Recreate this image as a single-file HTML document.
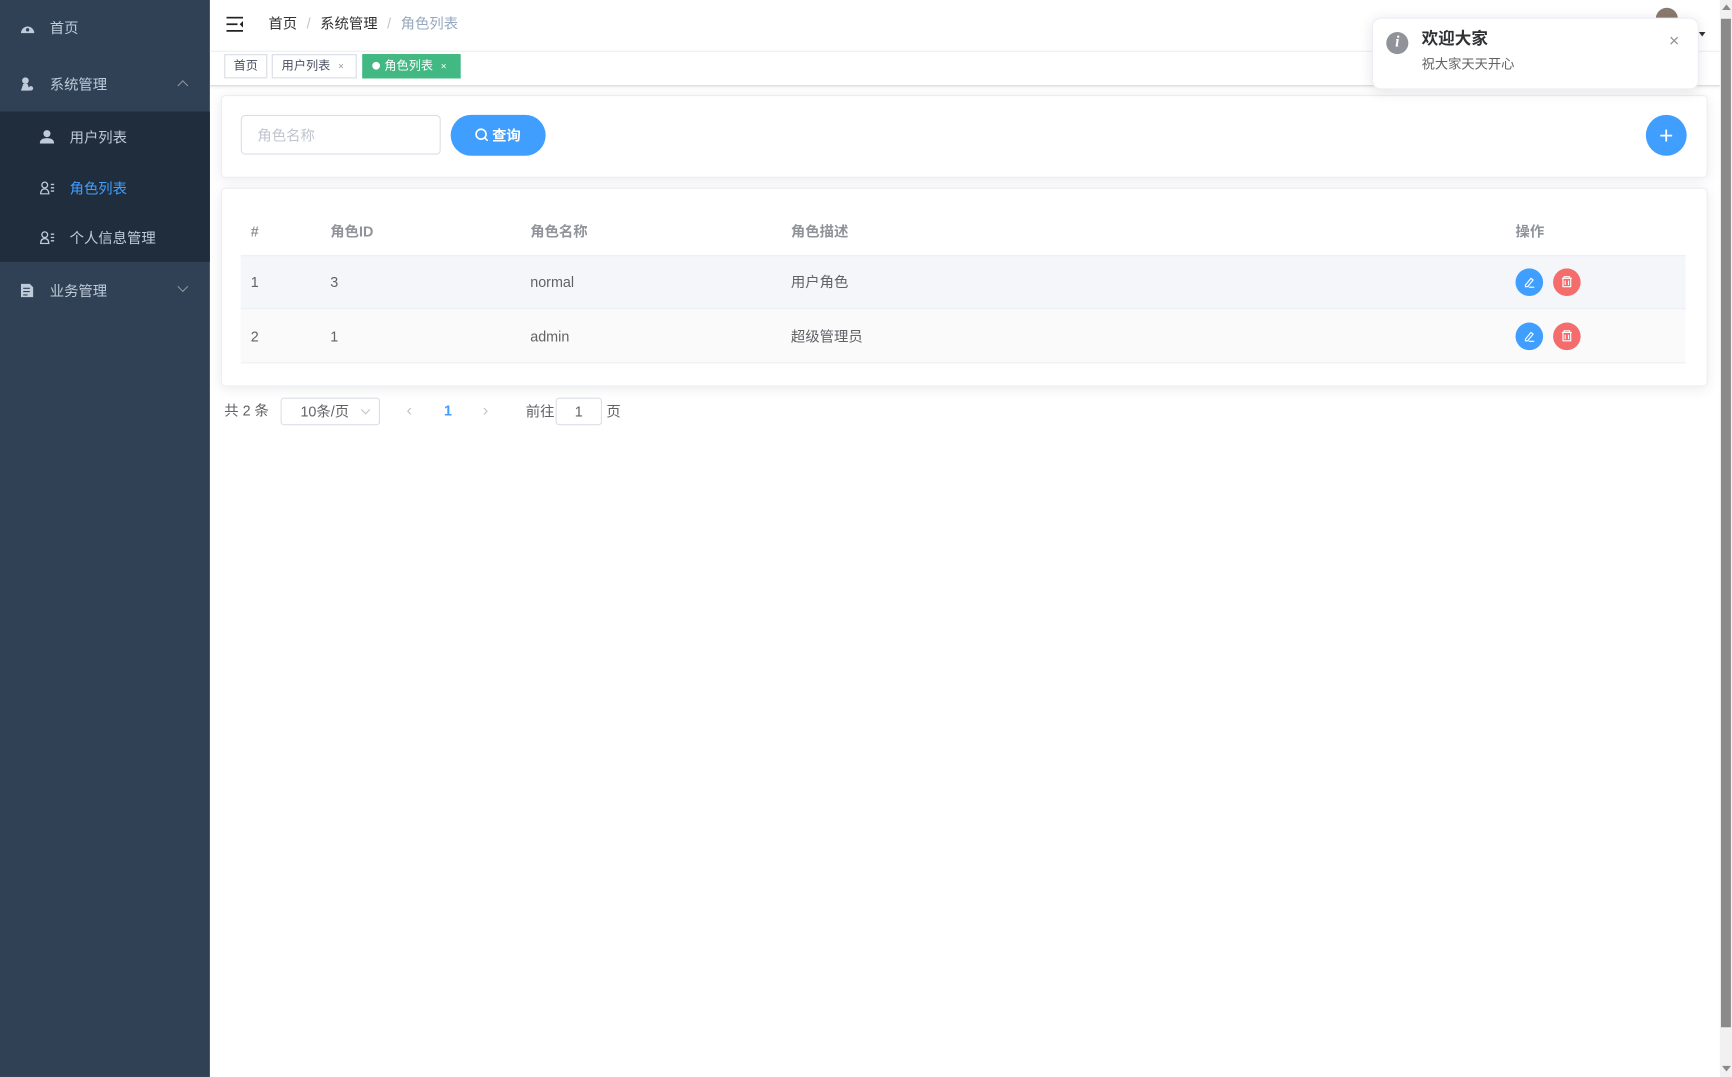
<!DOCTYPE html>
<html><head><meta charset="utf-8"><style>
html,body{margin:0;padding:0;width:1732px;height:1077px;overflow:hidden;background:#fff;font-family:"Liberation Sans","Noto Sans CJK SC",sans-serif;line-height:1.15}
#w{position:absolute;left:0;top:0;width:1568px;height:975px;transform:scale(1.10459);transform-origin:0 0;}
.a{position:absolute}
.side{left:0;top:0;width:190px;height:975px;background:#304156}
.sub{left:0;top:101px;width:190px;height:136px;background:#1f2d3d}
.mi{color:#bfcbd9;font-size:13px}
.t{font-size:13px;color:#606266}
.tag{top:49px;height:22px;border:1px solid #d8dce5;background:#fff;font-size:11px;color:#495060;line-height:21px;box-sizing:border-box}
.card{background:#fff;border:1px solid #ebeef5;border-radius:4px;box-shadow:0 2px 12px rgba(0,0,0,.08)}
.th{font-size:13px;color:#909399;font-weight:bold;top:201px;line-height:18px}
.td{font-size:13px;color:#606266;line-height:18px}
</style></head><body><div id="w">
<div class="a side"></div><div class="a sub"></div>
<svg class="a" style="left:18px;top:19px" width="14" height="12" viewBox="0 0 14 12"><path d="M1 11A6 6 0 1 1 13 11Z" fill="#bfcbd9"/><circle cx="7" cy="8" r="1.5" fill="#304156"/></svg>
<div class="a mi" style="left:45px;top:19px">首页</div>
<svg class="a" style="left:18px;top:69px" width="13" height="14"><circle cx="5" cy="4" r="3" fill="#bfcbd9"/><path d="M1 13 3 7h4l2 6z" fill="#bfcbd9"/><circle cx="10" cy="11" r="2" fill="#bfcbd9"/></svg>
<div class="a mi" style="left:45px;top:70px">系统管理</div>
<div class="a" style="left:162px;top:74px;width:6px;height:6px;border-left:1px solid #909399;border-top:1px solid #909399;transform:rotate(45deg)"></div>
<svg class="a" style="left:36px;top:117px" width="13" height="13"><circle cx="6.5" cy="4" r="3.2" fill="#bfcbd9"/><path d="M0 13Q0 8 6.5 8T13 13z" fill="#bfcbd9"/></svg>
<div class="a mi" style="left:63px;top:118px">用户列表</div>
<svg class="a" style="left:36px;top:164px" width="14" height="12" fill="none" stroke="#bfcbd9" stroke-width="1.2"><circle cx="4.5" cy="3.5" r="2.6"/><path d="M.8 11.5Q1 7 4.5 7T8.2 11.5zM10 3h3M10 6h3M10 9h3"/></svg>
<div class="a" style="left:63px;top:164px;font-size:13px;color:#409eff">角色列表</div>
<svg class="a" style="left:36px;top:209px" width="14" height="12" fill="none" stroke="#bfcbd9" stroke-width="1.2"><circle cx="4.5" cy="3.5" r="2.6"/><path d="M.8 11.5Q1 7 4.5 7T8.2 11.5zM10 3h3M10 6h3M10 9h3"/></svg>
<div class="a mi" style="left:63px;top:209px">个人信息管理</div>
<svg class="a" style="left:18px;top:256px" width="13" height="14"><path d="M1 1h8l3 3v9H1z" fill="#bfcbd9"/><path d="M3 5h6M3 8h6M3 11h4" stroke="#304156"/></svg>
<div class="a mi" style="left:45px;top:257px">业务管理</div>
<div class="a" style="left:162px;top:256px;width:6px;height:6px;border-right:1px solid #909399;border-bottom:1px solid #909399;transform:rotate(45deg)"></div>

<div class="a" style="left:190px;top:46px;width:1367px;height:30px;border-bottom:1px solid #d8dce5;box-shadow:0 1px 3px rgba(0,0,0,.08);border-top:1px solid #f0f0f0"></div>
<svg class="a" style="left:205px;top:15px" width="16" height="14"><path d="M0 1h15M0 7h10M0 13h15" stroke="#222" stroke-width="1.6"/><path d="M15 4l-3 3 3 3z" fill="#222"/></svg>
<div class="a t" style="left:243px;top:15px;color:#303133">首页 <span style="color:#c0c4cc;margin:0 5px">/</span> 系统管理 <span style="color:#c0c4cc;margin:0 5px">/</span> <span style="color:#97a8be">角色列表</span></div>
<div class="a tag" style="left:203px;width:39px;text-align:center">首页</div>
<div class="a tag" style="left:246px;width:77px;padding-left:8px">用户列表 <span style="font-size:9px;color:#999;margin-left:4px">×</span></div>
<div class="a tag" style="left:328px;width:89px;background:#42b983;border-color:#42b983;color:#fff;padding-left:8px"><span style="display:inline-block;width:7px;height:7px;border-radius:50%;background:#fff;margin-right:4px;vertical-align:0"></span>角色列表 <span style="font-size:9px;margin-left:4px">×</span></div>

<div class="a card" style="left:200px;top:86px;width:1344px;height:73px"></div>
<div class="a" style="left:218px;top:104px;width:181px;height:36px;border:1px solid #dcdfe6;border-radius:4px;box-sizing:border-box;padding-left:14px;line-height:36px;font-size:13px;color:#c0c4cc">角色名称</div>
<div class="a" style="left:408px;top:104px;width:86px;height:37px;border-radius:19px;background:#409eff;color:#fff;font-size:13px;font-weight:bold;line-height:37px;text-align:center"><svg width="12" height="12" style="vertical-align:-1px;margin-right:3px" fill="none" stroke="#fff" stroke-width="1.5"><circle cx="5.5" cy="5.5" r="4.5"/><path d="M9 9l2.5 2.5"/></svg>查询</div>
<div class="a" style="left:1490px;top:104px;width:37px;height:37px;border-radius:50%;background:#409eff;color:#fff;font-size:22px;line-height:37px;text-align:center;font-weight:300">+</div>

<div class="a card" style="left:200px;top:170px;width:1344px;height:178px"></div>
<div class="a th" style="left:227px">#</div><div class="a th" style="left:299px">角色ID</div><div class="a th" style="left:480px">角色名称</div><div class="a th" style="left:716px">角色描述</div><div class="a th" style="left:1372px">操作</div>
<div class="a" style="left:218px;top:231px;width:1308px;height:49px;background:#f4f6fa;border-top:1px solid #ebeef5;border-bottom:1px solid #ebeef5;box-sizing:border-box"></div>
<div class="a" style="left:218px;top:280px;width:1308px;height:49px;background:#fafafa;border-bottom:1px solid #ebeef5;box-sizing:border-box"></div>
<div class="a td" style="left:227px;top:247px">1</div><div class="a td" style="left:299px;top:247px">3</div><div class="a td" style="left:480px;top:247px">normal</div><div class="a td" style="left:716px;top:247px">用户角色</div>
<div class="a td" style="left:227px;top:296px">2</div><div class="a td" style="left:299px;top:296px">1</div><div class="a td" style="left:480px;top:296px">admin</div><div class="a td" style="left:716px;top:296px">超级管理员</div>
<svg class="a" style="left:1372px;top:243px" width="62" height="80">
<g id="r"><circle cx="12.5" cy="12.5" r="12.5" fill="#409eff"/><path d="M9 15l5-6 2 1.5-5 6H9zM12 17h5" stroke="#fff" stroke-width="1" fill="none"/><circle cx="46.5" cy="12.5" r="12.5" fill="#f56c6c"/><path d="M42 9h9M44 9v-1.5h5V9M43 9.5v7h7v-7M45 11v4M48 11v4" stroke="#fff" stroke-width="1" fill="none"/></g>
<use href="#r" y="49"/></svg>

<div class="a t" style="left:203px;top:365px">共 2 条</div>
<div class="a" style="left:254px;top:360px;width:90px;height:25px;border:1px solid #dcdfe6;border-radius:3px;box-sizing:border-box;font-size:13px;color:#606266;line-height:23px;padding-left:17px">10条/页</div>
<div class="a" style="left:328px;top:368px;width:5px;height:5px;border-right:1px solid #c0c4cc;border-bottom:1px solid #c0c4cc;transform:rotate(45deg)"></div>
<div class="a" style="left:368px;top:363px;color:#c0c4cc;font-size:15px">‹</div>
<div class="a" style="left:402px;top:365px;color:#409eff;font-size:13px;font-weight:bold">1</div>
<div class="a" style="left:437px;top:363px;color:#c0c4cc;font-size:15px">›</div>
<div class="a t" style="left:476px;top:366px">前往</div>
<div class="a" style="left:503px;top:360px;width:42px;height:25px;border:1px solid #dcdfe6;border-radius:3px;box-sizing:border-box;text-align:center;line-height:23px;font-size:13px;color:#606266">1</div>
<div class="a t" style="left:549px;top:366px">页</div>

<div class="a" style="left:1499px;top:7px;width:20px;height:12px;border-radius:10px 10px 0 0;background:#8a7a70"></div>
<div class="a" style="left:1538px;top:29px;border:3px solid transparent;border-top:4px solid #333"></div>
<div class="a" style="left:1242px;top:16px;width:296px;height:65px;background:#fff;border:1px solid #ebeef5;border-radius:8px;box-shadow:0 2px 12px rgba(0,0,0,.1);box-sizing:border-box"></div>
<div class="a" style="left:1255px;top:29px;width:20px;height:20px;border-radius:50%;background:#909399;color:#fff;font:italic bold 14px 'Liberation Serif',serif;text-align:center;line-height:20px">i</div>
<div class="a" style="left:1287px;top:27px;font-size:15px;font-weight:bold;color:#303133">欢迎大家</div>
<div class="a" style="left:1287px;top:52px;font-size:12px;color:#606266">祝大家天天开心</div>
<div class="a" style="left:1511px;top:30px;font-size:16px;color:#909399;line-height:16px">×</div>

<div class="a" style="left:1557px;top:0;width:11px;height:975px;background:#f1f1f1"></div>
<div class="a" style="left:1558px;top:17px;width:9px;height:913px;background:#8a8a8a"></div>
<div class="a" style="left:1559px;top:4px;border:4px solid transparent;border-bottom:5px solid #8a8a8a;border-top:0"></div>
<div class="a" style="left:1559px;top:965px;border:4px solid transparent;border-top:5px solid #8a8a8a;border-bottom:0"></div>
</div></body></html>
